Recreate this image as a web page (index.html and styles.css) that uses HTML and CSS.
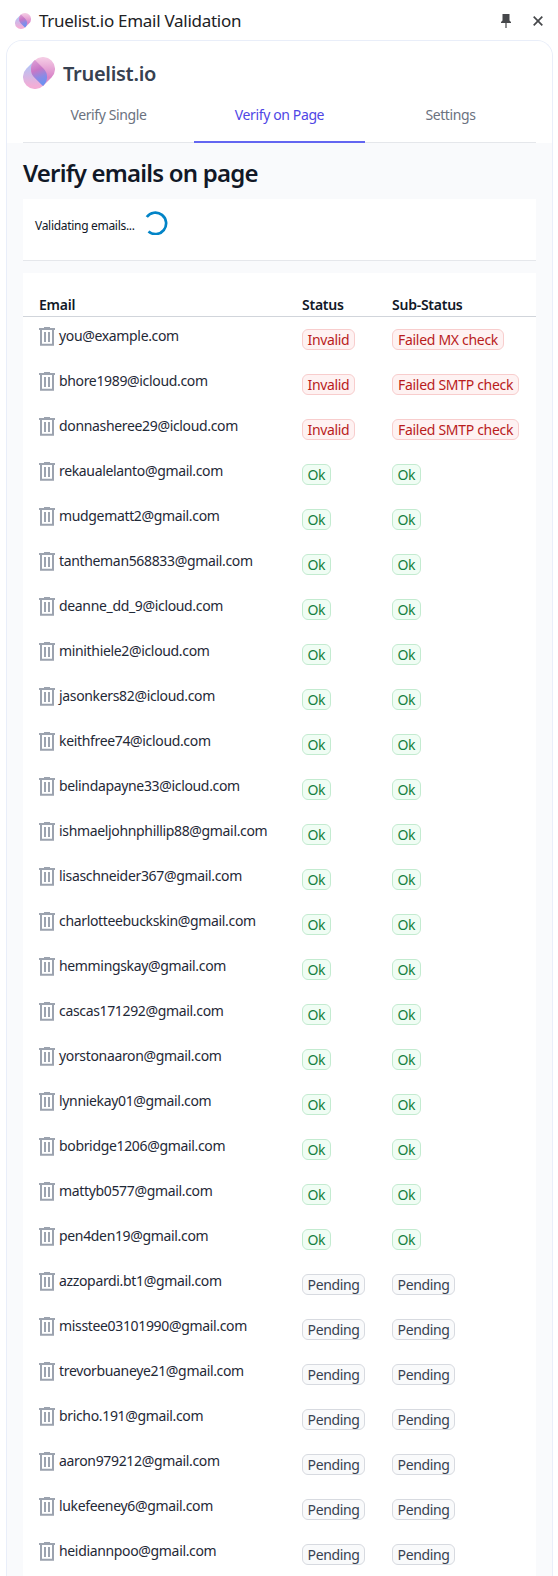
FILE: index.html
```html
<!DOCTYPE html>
<html lang="en">
<head>
<meta charset="utf-8">
<title>Truelist.io Email Validation</title>
<link rel="stylesheet" href="styles.css">
</head>
<body>
<svg class="defs" width="0" height="0" aria-hidden="true">
  <defs>
    <linearGradient id="back" x1="0" y1="0" x2="0" y2="1"><stop offset=".2" stop-color="#b5c3f5"/><stop offset=".9" stop-color="#f3add6"/></linearGradient>
    <linearGradient id="front" x1="0" y1="0" x2="0" y2="1"><stop offset="0" stop-color="#f6cfe6"/><stop offset=".7" stop-color="#d984c8"/><stop offset="1" stop-color="#e09ad0"/></linearGradient>
    <linearGradient id="lens" x1="0" y1="0" x2=".25" y2="1"><stop offset="0" stop-color="#dfa3d6"/><stop offset=".45" stop-color="#c777c6"/><stop offset=".75" stop-color="#8c8ae4"/><stop offset="1" stop-color="#6f91f0"/></linearGradient>
    <symbol id="logo" viewBox="0 0 32 32">
      <path fill="url(#back)" d="M12 3L3.500 11.500A12 12 0 1 0 20.500 28.500L24 20L20.500 11.500Z"/>
      <path fill="url(#front)" d="M11.500 3.500A12 12 0 1 1 28.500 20.500L20.500 28.500L20 29L11.500 20.500A12 12 0 0 1 11.500 3.500Z"/>
      <path fill="url(#lens)" d="M12 3L20.500 11.500A12 12 0 0 1 20 29L11.500 20.500A12 12 0 0 1 12 3Z"/>
    </symbol>
    <symbol id="trash" viewBox="0 0 16 19"><path fill="none" stroke="#9ca3af" stroke-width="2" d="M0 2H16M2 2V17.800H14V2"/><path fill="none" stroke="#9ca3af" stroke-width="2" d="M6 5V15M10 5V15"/><path fill="#9ca3af" d="M5 0H11V2H5Z"/></symbol>
  </defs>
</svg>
<header class="titlebar">
  <svg class="titlebar-logo"><use href="#logo"/></svg>
  <span class="titlebar-name">Truelist.io Email Validation</span>
  <svg class="pin" viewBox="0 0 10 14"><path fill="#46484b" d="M1.500 0H8.500V6.500L10 8V9H5.600V14H4.400V9H0V8L1.500 6.500Z"/></svg>
  <svg class="close" viewBox="0 0 10 10"><path fill="none" stroke="#46484b" stroke-width="1.700" d="M.7.700 9.300 9.300M9.300.700.700 9.300"/></svg>
</header>
<div class="panel">
  <div class="panel-top">
    <div class="brand"><svg class="brand-logo"><use href="#logo"/></svg><span class="brand-name">Truelist.io</span></div>
    <nav class="tabs"><a class="tab"><span>Verify Single</span></a><a class="tab active"><span>Verify on Page</span></a><a class="tab"><span>Settings</span></a></nav>
  </div>
  <main class="content">
    <h1><span>Verify emails on page</span></h1>
    <section class="progress">
      <span class="progress-text">Validating emails...</span>
      <svg class="spinner" viewBox="0 0 24 24"><path fill="none" stroke="#0284c7" stroke-width="2.700" d="M2.800 6A10.700 10.700 0 1 1 4.500 20.500"/></svg>
    </section>
    <section class="results">
      <div class="row head"><span>Email</span><span>Status</span><span>Sub-Status</span></div>
      <div id="rows"></div>
    </section>
  </main>
</div>
<script src="rows.js"></script>
</body>
</html>
```
FILE: rows.js
```js
const groups = [
  ["invalid", "Invalid", "Failed MX check", ["you@example.com"]],
  ["invalid", "Invalid", "Failed SMTP check", ["bhore1989@icloud.com", "donnasheree29@icloud.com"]],
  ["ok", "Ok", "Ok", [
    "rekaualelanto@gmail.com", "mudgematt2@gmail.com", "tantheman568833@gmail.com",
    "deanne_dd_9@icloud.com", "minithiele2@icloud.com", "jasonkers82@icloud.com",
    "keithfree74@icloud.com", "belindapayne33@icloud.com", "ishmaeljohnphillip88@gmail.com",
    "lisaschneider367@gmail.com", "charlotteebuckskin@gmail.com", "hemmingskay@gmail.com",
    "cascas171292@gmail.com", "yorstonaaron@gmail.com", "lynniekay01@gmail.com",
    "bobridge1206@gmail.com", "mattyb0577@gmail.com", "pen4den19@gmail.com"]],
  ["pending", "Pending", "Pending", [
    "azzopardi.bt1@gmail.com", "misstee03101990@gmail.com", "trevorbuaneye21@gmail.com",
    "bricho.191@gmail.com", "aaron979212@gmail.com", "lukefeeney6@gmail.com", "heidiannpoo@gmail.com"]]
];
document.getElementById("rows").innerHTML = groups.map(([kind, status, sub, emails]) =>
  emails.map(email => `<div class="row">
    <span class="email"><svg class="trash"><use href="#trash"/></svg><span>${email}</span></span>
    <span class="cell"><span class="badge ${kind}">${status}</span></span>
    <span class="cell"><span class="badge sub ${kind}">${sub}</span></span>
  </div>`).join("")).join("");
```
FILE: styles.css
```css
* { box-sizing: border-box; }
body { margin: 0; height: 1576px; overflow: hidden; background: #fff; font-family: "Noto Sans", sans-serif; color: #1f2937; }
svg { display: block; flex: none; }
.defs { position: absolute; }
.titlebar { height: 40px; display: flex; align-items: center; padding: 2px 15px 0; color: #202124; }
.titlebar-logo { width: 16px; height: 16px; }
.titlebar-name { margin-left: 8px; font-size: 17px; letter-spacing: -.28px; white-space: nowrap; padding-bottom: 2px; }
.pin { width: 10px; height: 14px; margin-left: auto; }
.close { width: 10px; height: 10px; margin-left: 22px; }
.panel { margin: 0 5px 0 6px; height: 1536px; border: 1px solid #e9eef9; border-bottom: 0; border-radius: 16px 16px 0 0; overflow: hidden; background: #f9fafc; }
.panel-top { background: #fff; height: 102px; padding: 16px 16px 0; }
.brand { display: flex; align-items: center; height: 32px; }
.brand-logo { width: 32px; height: 32px; }
.brand-name { margin-left: 8px; font-size: 20px; font-weight: 600; line-height: 28px; color: #374151; letter-spacing: -.3px; padding-top: 2px; }
.tabs { display: grid; grid-template-columns: repeat(3, 1fr); height: 54px; width: 513px; }
.tab { text-align: center; font-size: 14px; line-height: 20px; padding-top: 16px; color: #6b7280; border-bottom: 1px solid #e5e7eb; letter-spacing: -.38px; }
.tab.active { color: #4f46e5; border-bottom: 2px solid #6366f1; }
.content { padding: 0 16px; width: 545px; }
h1 { margin: 0; height: 56px; padding-top: 14px; font-size: 24px; line-height: 32px; font-weight: 600; color: #111827; letter-spacing: -.8px; }
.progress { height: 62px; background: #fff; border-bottom: 1px solid #e5e7eb; padding: 12px 12px 0; display: flex; align-items: flex-start; }
.progress-text { font-size: 12px; line-height: 16px; padding-top: 7px; letter-spacing: -.3px; color: #111827; }
.spinner { width: 24px; height: 24px; margin-left: 9px; }
.results { margin-top: 12px; background: #fff; height: 1303px; }
.row { display: grid; grid-template-columns: 263px 90px 1fr; height: 45px; padding-left: 16px; white-space: nowrap; font-size: 14px; line-height: 20px; letter-spacing: -.34px; }
.row.head { font-weight: 600; color: #111827; padding-top: 22px; border-bottom: 1px solid #d1d5db; height: 44px; letter-spacing: -.25px; }
.email { display: flex; align-items: flex-start; padding-top: 9px; }
.trash { width: 16px; height: 19px; margin: 1px 4px 0 0; }
.cell { padding-top: 12px; }
.badge { display: inline-block; vertical-align: top; height: 21px; border: 1px solid; border-radius: 6px; padding: 0 4.500px; line-height: 20px; font-size: 14px; }
.badge.sub.invalid { padding: 0 5px; letter-spacing: -.3px; }
.invalid { color: #b91c1c; background: #fef2f2; border-color: #f8cdcd; }
.ok { color: #15803d; background: #f0fdf4; border-color: #c3ebd0; }
.pending { color: #374151; background: #f9fafb; border-color: #d7dae0; }
```
